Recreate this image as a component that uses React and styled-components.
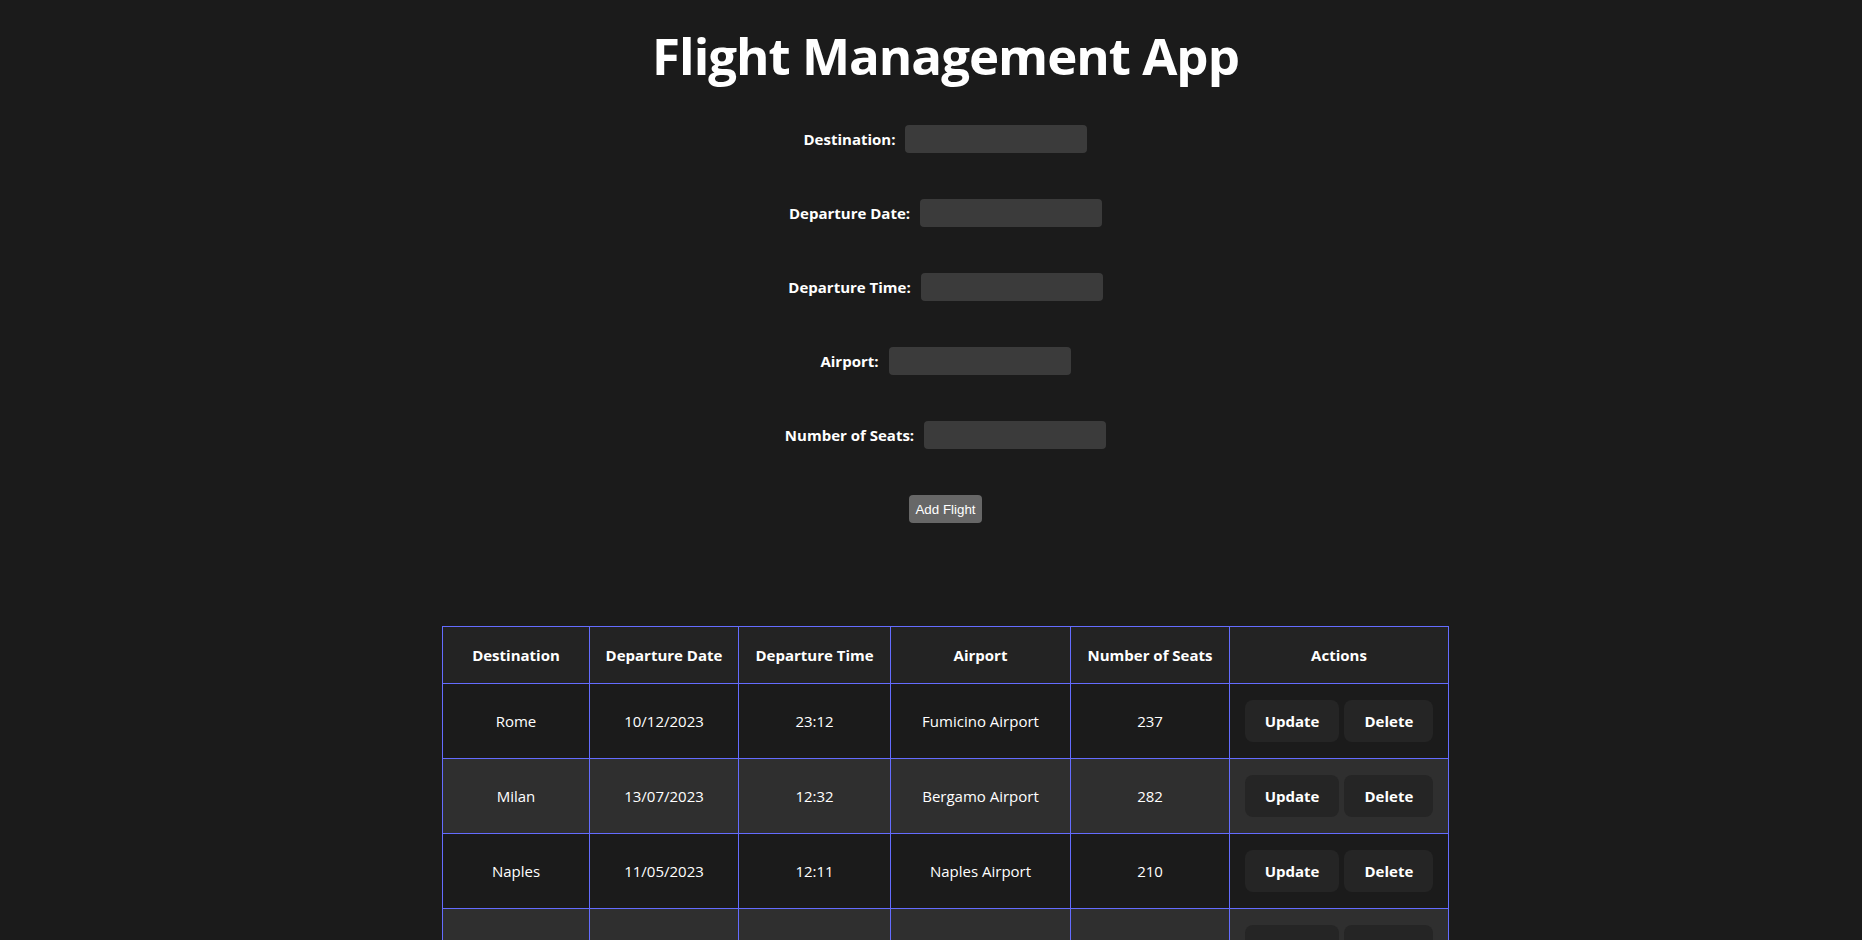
import React from 'react'
import styled, { createGlobalStyle } from 'styled-components'

const GlobalStyle = createGlobalStyle`
    body {
        margin: 0;
        background: #1b1b1b;
        color: #fff;
        font-family: "Open Sans", "Noto Sans", sans-serif;
    }
`

const Page = styled.div`
    display: flex;
    flex-direction: column;
    align-items: center;
    padding-left: 29px;
`

const Title = styled.h1`
    font-size: 51px;
    font-weight: 700;
    line-height: 1.1;
    margin: 27px 0 0;
    letter-spacing: -1px;
`

const Form = styled.form`
    display: flex;
    flex-direction: column;
    align-items: center;
    margin-top: 42px;
`

const Row = styled.div`
    display: flex;
    align-items: center;
    gap: 10px;
    margin-bottom: 46px;
`

const Label = styled.label`
    font-size: 15px;
    font-weight: 700;
`

const Input = styled.input`
    width: 182px;
    height: 28px;
    box-sizing: border-box;
    border: none;
    border-radius: 4px;
    background: #3b3b3b;
    color: #fff;
    padding: 0 8px;
`

const AddButton = styled.button`
    height: 28px;
    padding: 0 6px;
    border: none;
    border-radius: 4px;
    background: #676767;
    color: #fff;
    font-family: "Liberation Sans", Arial, sans-serif;
    font-size: 13.33px;
    cursor: pointer;
`

const Table = styled.table`
    margin-top: 103px;
    width: 1007px;
    table-layout: fixed;
    border-collapse: collapse;
    font-size: 15px;
`

const Th = styled.th`
    height: 56px;
    border: 1px solid #646cff;
    background: #232323;
    font-weight: 700;
    padding: 0;
`

const Tr = styled.tr`
    background: ${p => (p.$alt ? '#2f2f2f' : '#1b1b1b')};
`

const Td = styled.td`
    height: 74px;
    border: 1px solid #646cff;
    text-align: center;
    padding: 0;
`

const Actions = styled.div`
    display: flex;
    justify-content: center;
    gap: 5px;
`

const ActionButton = styled.button`
    height: 42px;
    padding: 0 19px;
    border: 1px solid transparent;
    border-radius: 8px;
    background: #252525;
    color: #fff;
    font-family: "Open Sans", "Noto Sans", sans-serif;
    font-size: 15px;
    font-weight: 700;
    cursor: pointer;
`

const fields = ['Destination', 'Departure Date', 'Departure Time', 'Airport', 'Number of Seats']

const flights = [
    ['Rome', '10/12/2023', '23:12', 'Fumicino Airport', '237'],
    ['Milan', '13/07/2023', '12:32', 'Bergamo Airport', '282'],
    ['Naples', '11/05/2023', '12:11', 'Naples Airport', '210'],
    ['Turin', '02/09/2023', '08:45', 'Caselle Airport', '198'],
]

const widths = [147, 149, 152, 180, 159, 219]

export default function App() {
    return (
        <Page>
            <GlobalStyle />
            <Title>Flight Management App</Title>
            <Form onSubmit={e => e.preventDefault()}>
                {fields.map(f => (
                    <Row key={f}>
                        <Label>{f}:</Label>
                        <Input type="text" />
                    </Row>
                ))}
                <AddButton type="submit">Add Flight</AddButton>
            </Form>
            <Table>
                <colgroup>
                    {widths.map((w, i) => <col key={i} style={{ width: w }} />)}
                </colgroup>
                <thead>
                    <tr>
                        {fields.map(f => <Th key={f}>{f}</Th>)}
                        <Th>Actions</Th>
                    </tr>
                </thead>
                <tbody>
                    {flights.map((row, i) => (
                        <Tr key={i} $alt={i % 2 === 1}>
                            {row.map((c, j) => <Td key={j}>{c}</Td>)}
                            <Td>
                                <Actions>
                                    <ActionButton>Update</ActionButton>
                                    <ActionButton>Delete</ActionButton>
                                </Actions>
                            </Td>
                        </Tr>
                    ))}
                </tbody>
            </Table>
        </Page>
    )
}
